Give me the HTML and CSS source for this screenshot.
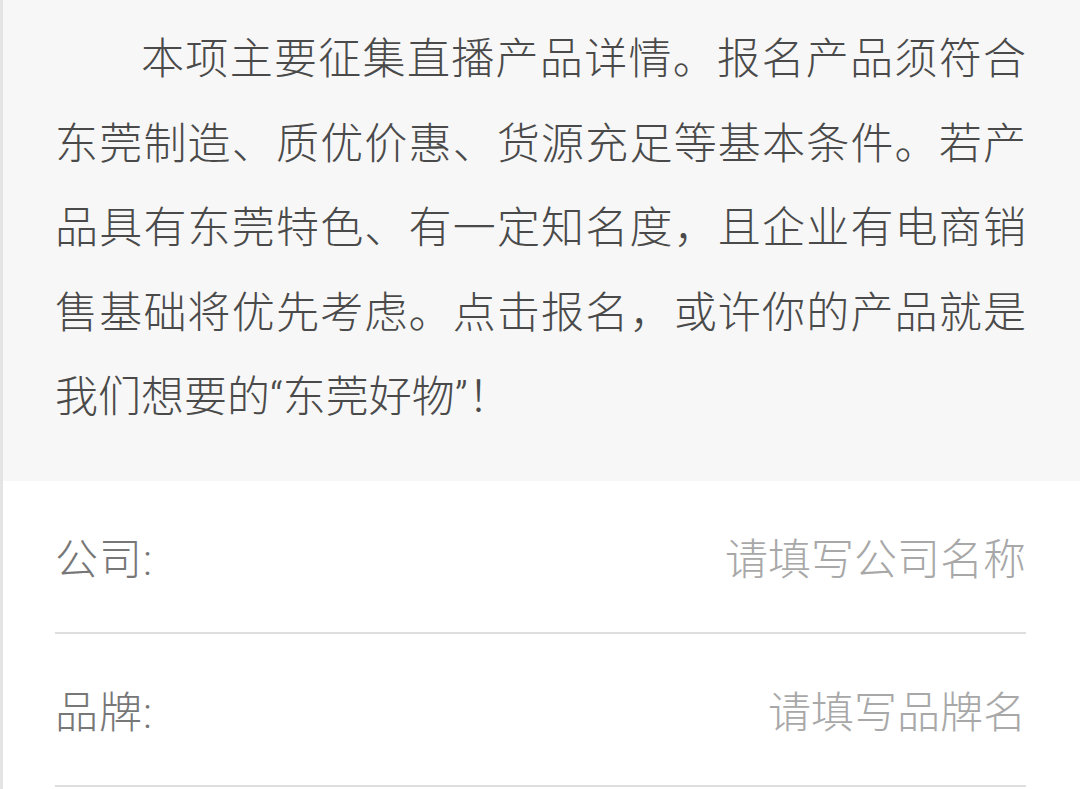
FILE: index.html
```html
<!DOCTYPE html>
<html lang="zh-CN">
<head>
<meta charset="utf-8">
<title>东莞好物报名</title>
<link rel="stylesheet" href="styles.css">
</head>
<body>
<div class="page">
  <section class="intro">
    <p class="intro-text">本项主要征集直播产品详情。报名产品须符合东莞制造、质优价惠、货源充足等基本条件。若产品具有东莞特色、有一定知名度，且企业有电商销售基础将优先考虑。点击报名，或许你的产品就是我们想要的“东莞好物”！</p>
  </section>
  <form class="form">
    <div class="row">
      <span class="label">公司:</span>
      <span class="placeholder">请填写公司名称</span>
    </div>
    <div class="row">
      <span class="label">品牌:</span>
      <span class="placeholder">请填写品牌名</span>
    </div>
  </form>
</div>
</body>
</html>
```

FILE: styles.css
```css
html, body {
  margin: 0;
  padding: 0;
  background: #ffffff;
}
body {
  font-family: Roboto, "Noto Sans CJK SC", sans-serif;
  font-weight: 300;
}
.page {
  border-left: 3px solid #e4e4e4;
  min-height: 789px;
  box-sizing: border-box;
}
.intro {
  background: #f7f7f7;
  padding: 17px 54px 41px 52px;
}
.intro-text {
  margin: 0;
  font-size: 43px;
  line-height: 84.6px;
  color: #4a4a4a;
  text-align: justify;
  text-indent: 2em;
}
.form {
  margin: 0 54px 0 52px;
}
.row {
  height: 151px;
  border-bottom: 2px solid #dedede;
  display: flex;
  align-items: center;
  justify-content: space-between;
  font-size: 43px;
}
.label {
  color: #777777;
  letter-spacing: 1px;
}
.placeholder {
  color: #a8a8a8;
}
```
